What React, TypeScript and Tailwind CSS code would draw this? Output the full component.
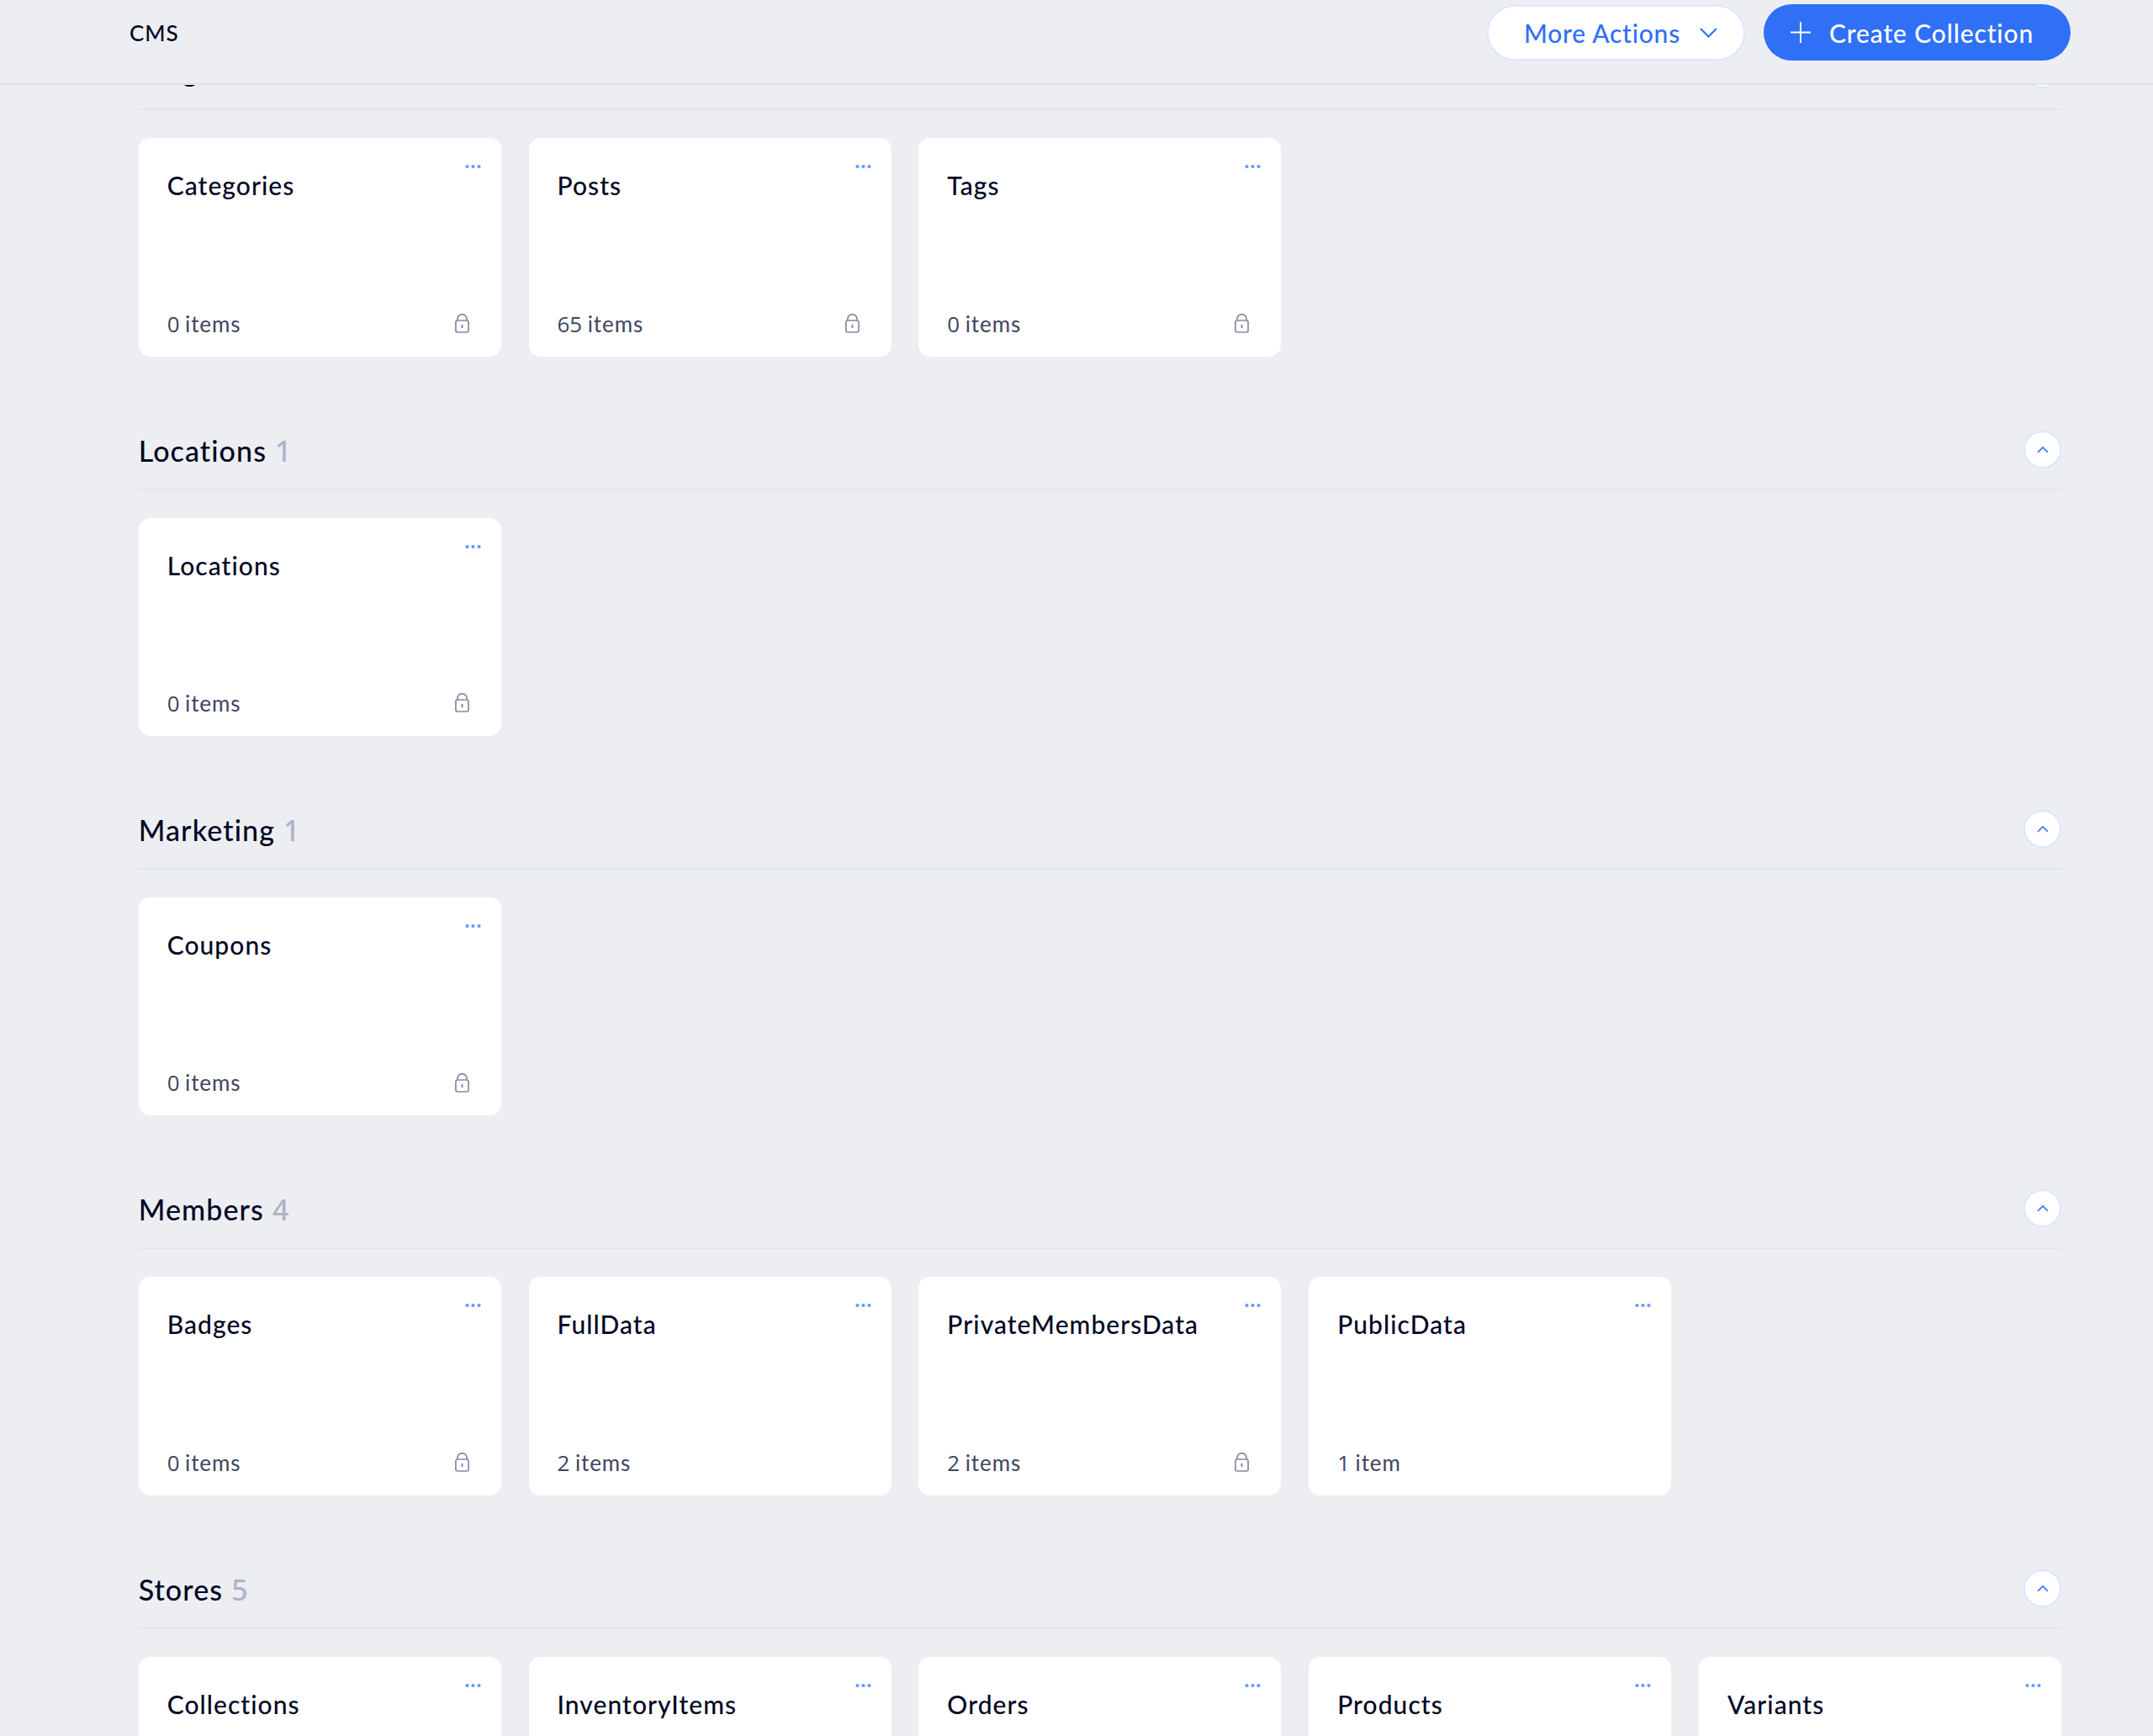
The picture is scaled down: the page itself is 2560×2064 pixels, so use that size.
type Collection = { name: string; count?: string; unit?: string; locked?: boolean };
type Section = { title: string; total: number; collections: Collection[] };

const sections: Section[] = [
  {
    title: "Blog",
    total: 3,
    collections: [
      { name: "Categories", count: "0", unit: "items", locked: true },
      { name: "Posts", count: "65", unit: "items", locked: true },
      { name: "Tags", count: "0", unit: "items", locked: true },
    ],
  },
  {
    title: "Locations",
    total: 1,
    collections: [{ name: "Locations", count: "0", unit: "items", locked: true }],
  },
  {
    title: "Marketing",
    total: 1,
    collections: [{ name: "Coupons", count: "0", unit: "items", locked: true }],
  },
  {
    title: "Members",
    total: 4,
    collections: [
      { name: "Badges", count: "0", unit: "items", locked: true },
      { name: "FullData", count: "2", unit: "items" },
      { name: "PrivateMembersData", count: "2", unit: "items", locked: true },
      { name: "PublicData", count: "1", unit: "item" },
    ],
  },
  {
    title: "Stores",
    total: 5,
    collections: [
      { name: "Collections" },
      { name: "InventoryItems" },
      { name: "Orders" },
      { name: "Products" },
      { name: "Variants" },
    ],
  },
];

function LockIcon() {
  return (
    <svg width="17" height="23" viewBox="0 0 17 23" fill="none" stroke="#868aa5" strokeWidth="1.7">
      <rect x="0.9" y="8" width="15.2" height="14" rx="2.4" />
      <path d="M2.9 8V6.4a5.6 5.6 0 0 1 11.2 0V8" />
      <path d="M8.5 13v4" strokeWidth="2" />
    </svg>
  );
}

function CollectionCard({ name, count, unit, locked }: Collection) {
  return (
    <div className="flex h-[259.2px] flex-col justify-between rounded-[14px] bg-white pt-[38px] pb-[23px] pl-[34px]">
      <div className="flex items-start justify-between pr-[24px]">
        <h3 className="text-[30px] leading-[36px] font-medium tracking-[1.05px]">{name}</h3>
        <button aria-label="More" className="-mt-[7px]">
          <svg width="19" height="6" viewBox="0 0 19 6" fill="#6199ff">
            <circle cx="2.5" cy="3" r="2.1" />
            <circle cx="9.5" cy="3" r="2.1" />
            <circle cx="16.5" cy="3" r="2.1" />
          </svg>
        </button>
      </div>
      {count && (
        <div className="flex items-center justify-between pr-[38px]">
          <p className="flex gap-[6.5px] text-[26px] leading-[32px] tracking-[0.9px] text-[#40455f]">
            <span className="font-['Open_Sans',sans-serif] tracking-[0px]">{count}</span>
            <span>{unit}</span>
          </p>
          {locked && <LockIcon />}
        </div>
      )}
    </div>
  );
}

function SectionBlock({ title, total, collections }: Section) {
  return (
    <section className="h-[451.35px]">
      <div className="flex h-[93px] items-center justify-between">
        <h2 className="flex gap-[10px] pt-[3px] text-[34px] leading-[40px] font-medium tracking-[1.1px]">
          <span>{title}</span>
          <span className="font-['Noto_Sans',sans-serif] tracking-[0px] text-[#b0b2c8]">{total}</span>
        </h2>
        <button
          aria-label="Collapse"
          className="flex size-[45px] items-center justify-center rounded-full border-2 border-[#dbe7fe] bg-white"
        >
          <svg width="14" height="9" viewBox="0 0 14 9" fill="none" stroke="#4a83f7" strokeWidth="1.9">
            <path d="M1 7.8 7 1.8l6 6" />
          </svg>
        </button>
      </div>
      <div className="h-[2px] bg-[#dfe5eb]" />
      <div className="mt-[33px] grid grid-cols-5 gap-x-[32.8px]">
        {collections.map((c) => (
          <CollectionCard key={c.name} {...c} />
        ))}
      </div>
    </section>
  );
}

export default function App() {
  return (
    <div className="h-[2064px] w-[2560px] overflow-hidden bg-[#edeef2] font-['Lato',sans-serif] text-[#000624]">
      <header className="relative z-10 flex h-[101px] items-start justify-between border-b-2 border-[#dfe5eb] bg-[#edeef2] pt-[5px] pr-[98px] pl-[154px]">
        <h1 className="flex h-[67px] items-center text-[26px] leading-[32px] font-medium tracking-[1px]">CMS</h1>
        <div className="flex items-center gap-[22px]">
          <button className="flex h-[66px] w-[307px] items-center justify-between rounded-full border-2 border-[#dbe7fe] bg-white pr-[31px] pl-[42px] text-[#2f70f7]">
            <span className="text-[30px] leading-[36px] font-medium tracking-[0.75px]">More Actions</span>
            <svg width="21" height="12" viewBox="0 0 21 12" fill="none" stroke="currentColor" strokeWidth="2.2">
              <path d="m1 1 9.5 9.5L20 1" />
            </svg>
          </button>
          <button className="flex h-[67px] w-[365px] items-center rounded-full bg-[#2f70f7] pl-[32px] text-white">
            <svg width="24" height="25" viewBox="0 0 24 25" fill="none" stroke="currentColor" strokeWidth="1.9">
              <path d="M12 0v25M0 12.5h24" />
            </svg>
            <span className="ml-[22px] text-[30px] leading-[36px] font-medium tracking-[0.85px]">Create Collection</span>
          </button>
        </div>
      </header>
      <main className="-mt-[64.6px] pr-[109px] pl-[164.7px]">
        {sections.map((s) => (
          <SectionBlock key={s.title} {...s} />
        ))}
      </main>
    </div>
  );
}
